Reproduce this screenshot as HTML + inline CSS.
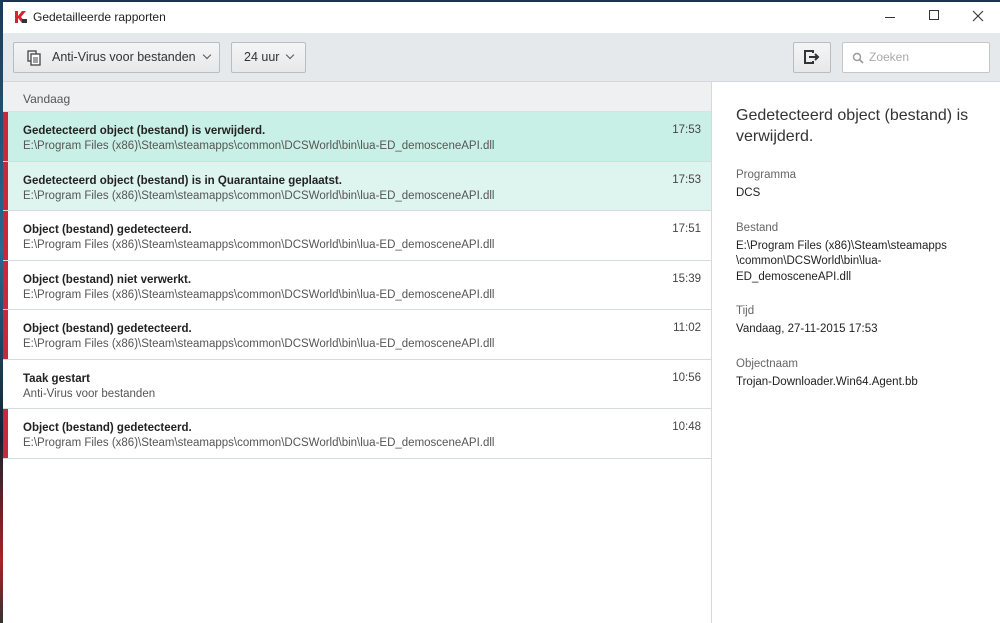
<!DOCTYPE html><html><head><style>
*{margin:0;padding:0;box-sizing:border-box}
body{width:1000px;height:623px;overflow:hidden;font-family:"Liberation Sans",sans-serif;background:#fff;position:relative;color:#222}
.strip{position:absolute;left:0;top:0;width:3px;height:623px;background:linear-gradient(#1a3a5a,#2a6a8a 40%,#123 70%,#a22 90%,#333)}
.topline{position:absolute;left:0;top:0;width:1000px;height:2px;background:#1b3550}
.title{position:absolute;left:3px;top:2px;width:997px;height:31px;background:#fff}
.title span{position:absolute;left:30px;top:8px;font-size:12px;color:#222}
.tb{position:absolute;left:3px;top:33px;width:997px;height:49px;background:#e6e9ec;border-bottom:1px solid #d4d8dc}
.btn{position:absolute;top:9px;height:31px;border:1px solid #b9bdc1;border-radius:2px;background:linear-gradient(#f4f5f6,#e6e8ea);font-size:12.5px;color:#333;line-height:29px}
.chev{position:absolute;top:9px;width:6px;height:6px;border-right:1.3px solid #555;border-bottom:1.3px solid #555;transform:rotate(45deg)}
.search{position:absolute;left:839px;top:9px;width:148px;height:31px;border:1px solid #c4c7ca;background:#fff;border-radius:2px;font-size:12px;color:#aaa;line-height:29px;padding-left:26px}
.list{position:absolute;left:3px;top:82px;width:709px;height:541px;background:#fff;border-right:1px solid #d6d9dc}
.hdr{height:30px;background:#eef0f2;border-bottom:1px solid #dde0e3;font-size:12px;color:#555;padding:10px 0 0 20px}
.row{position:relative;height:49.5px;border-bottom:1px solid #d4dade;padding:13px 0 0 20px}
.row.r:before{content:"";position:absolute;left:0;top:0;width:5px;height:100%;background:#c8293a}
.row b{display:block;font-size:11.5px;color:#222;font-weight:bold}
.row i{display:block;font-style:normal;font-size:11.5px;color:#555;margin-top:3px}
.row em{position:absolute;right:10px;top:12px;font-style:normal;font-size:11.5px;color:#444}
.det{position:absolute;left:736px;top:105px;width:250px}
.det h1{font-weight:normal;font-size:16px;line-height:21px;color:#333;margin-bottom:22px}
.det .l{font-size:11.5px;color:#666;margin-bottom:5px}
.det .v{font-size:11.5px;color:#222;line-height:15.5px;margin-bottom:20px}
</style></head><body>
<div class="topline"></div><div class="strip"></div>
<div class="title">
<svg style="position:absolute;left:11px;top:8px" width="14" height="14"><path d="M1 1h3v5l4-5h4l-5 6 5 6H8L4 8v5H1z" fill="#d8232a"/><rect x="8" y="9" width="5" height="4" fill="#333"/></svg>
<span>Gedetailleerde rapporten</span>
<div style="position:absolute;left:882px;top:15px;width:10px;height:1px;background:#333"></div>
<div style="position:absolute;left:926px;top:8px;width:10px;height:10px;border:1px solid #333"></div>
<svg style="position:absolute;left:969px;top:8px" width="12" height="12"><path d="M1 1L11 11M11 1L1 11" stroke="#333" stroke-width="1.1"/></svg>
</div>
<div class="tb">
<div class="btn" style="left:10px;width:207px"><svg style="position:absolute;left:13px;top:7px" width="14" height="16"><rect x="1" y="1" width="8" height="10" fill="none" stroke="#444" stroke-width="1.3"/><rect x="4" y="4" width="9" height="11" fill="#fff" stroke="#444" stroke-width="1.3"/><path d="M6 8h5M6 10h5M6 12h5" stroke="#444"/></svg><span style="position:absolute;left:38px">Anti-Virus voor bestanden</span><div class="chev" style="left:190px"></div></div>
<div class="btn" style="left:228px;width:75px"><span style="position:absolute;left:12px">24 uur</span><div class="chev" style="left:55px"></div></div>
<div class="btn" style="left:790px;width:38px"><svg style="position:absolute;left:10px;top:7px" width="18" height="15"><path d="M9 3V1H1v12h8v-2" fill="none" stroke="#333" stroke-width="2"/><path d="M5 7h8M11 4l3 3-3 3" fill="none" stroke="#333" stroke-width="2"/></svg></div>
<div class="search"><svg style="position:absolute;left:9px;top:9px" width="12" height="12"><circle cx="5" cy="5" r="3.5" fill="none" stroke="#999" stroke-width="1.4"/><path d="M7.5 7.5L11 11" stroke="#999" stroke-width="1.6"/></svg>Zoeken</div>
</div>
<div class="list">
<div class="hdr">Vandaag</div>
<div class="row r" style="background:#c9f0e6"><b>Gedetecteerd object (bestand) is verwijderd.</b><i>E:\Program Files (x86)\Steam\steamapps\common\DCSWorld\bin\lua-ED_demosceneAPI.dll</i><em>17:53</em></div>
<div class="row r" style="background:#def4ee"><b>Gedetecteerd object (bestand) is in Quarantaine geplaatst.</b><i>E:\Program Files (x86)\Steam\steamapps\common\DCSWorld\bin\lua-ED_demosceneAPI.dll</i><em>17:53</em></div>
<div class="row r"><b>Object (bestand) gedetecteerd.</b><i>E:\Program Files (x86)\Steam\steamapps\common\DCSWorld\bin\lua-ED_demosceneAPI.dll</i><em>17:51</em></div>
<div class="row r"><b>Object (bestand) niet verwerkt.</b><i>E:\Program Files (x86)\Steam\steamapps\common\DCSWorld\bin\lua-ED_demosceneAPI.dll</i><em>15:39</em></div>
<div class="row r"><b>Object (bestand) gedetecteerd.</b><i>E:\Program Files (x86)\Steam\steamapps\common\DCSWorld\bin\lua-ED_demosceneAPI.dll</i><em>11:02</em></div>
<div class="row"><b>Taak gestart</b><i>Anti-Virus voor bestanden</i><em>10:56</em></div>
<div class="row r"><b>Object (bestand) gedetecteerd.</b><i>E:\Program Files (x86)\Steam\steamapps\common\DCSWorld\bin\lua-ED_demosceneAPI.dll</i><em>10:48</em></div>
</div>
<div class="det">
<h1>Gedetecteerd object (bestand) is verwijderd.</h1>
<div class="l">Programma</div><div class="v">DCS</div>
<div class="l">Bestand</div><div class="v">E:\Program Files (x86)\Steam\steamapps<br>\common\DCSWorld\bin\lua-<br>ED_demosceneAPI.dll</div>
<div class="l">Tijd</div><div class="v">Vandaag, 27-11-2015 17:53</div>
<div class="l">Objectnaam</div><div class="v">Trojan-Downloader.Win64.Agent.bb</div>
</div>
</body></html>
